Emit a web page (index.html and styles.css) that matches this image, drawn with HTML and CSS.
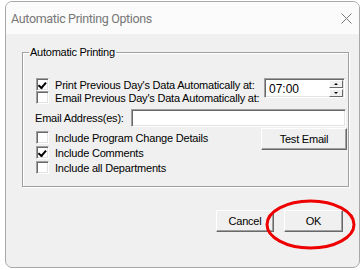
FILE: index.html
```html
<!DOCTYPE html>
<html lang="en">
<head>
	<title>Automatic Printing Options</title>
	<meta charset="utf-8">
<link rel="stylesheet" href="styles.css">
</head>
<body>

<div class="window">
	<div class="titlebar">
		<span class="title">Automatic Printing Options</span>
		<svg class="close" width="11" height="11" viewBox="0 0 11 11">
			<path d="M0.5 0.5 L10.5 10.5 M10.5 0.5 L0.5 10.5" stroke="#7a7a7a" stroke-width="1" fill="none"/>
		</svg>
	</div>

	<div class="content">
		<fieldset class="group">
			<legend>Automatic Printing</legend>

			<div class="toprows">
				<div class="checks">
					<label class="check"><span class="box on"></span>Print Previous Day's Data Automatically at:</label>
					<label class="check"><span class="box"></span>Email Previous Day's Data Automatically at:</label>
				</div>
				<div class="spinner">
					<span class="time">07:00</span>
					<span class="spins">
						<span class="spin up"></span>
						<span class="spin down"></span>
					</span>
				</div>
			</div>

			<div class="emailrow">
				<label class="emaillabel" for="email">Email Address(es):</label>
				<input id="email" class="field">
			</div>

			<div class="bottomrows">
				<div class="checks lower">
					<label class="check"><span class="box"></span>Include Program Change Details</label>
					<label class="check"><span class="box on"></span>Include Comments</label>
					<label class="check"><span class="box"></span>Include all Departments</label>
				</div>
				<button class="btn test">Test Email</button>
			</div>
		</fieldset>

		<div class="buttons">
			<button class="btn cancel">Cancel</button>
			<button class="btn ok">OK</button>
		</div>
	</div>

	<!-- red annotation round the OK button -->
	<svg class="circle" width="95" height="55" viewBox="0 0 95 55">
		<ellipse cx="47.5" cy="27.5" rx="43.5" ry="23.5" stroke="#ee0000" stroke-width="3" fill="none"/>
	</svg>
</div>

</body>
</html>
```

FILE: styles.css
```css
	body {
		margin: 0;
		background-color: #ffffff;
		font-family: "Liberation Sans", Arial, sans-serif;
		font-size: 11px;
		letter-spacing: -0.2px;
		color: #000;
	}
	.window {
		position: relative;
		margin: 1px 0 0 5px;
		width: 353px;
		height: 265px;
		border: 1px solid #a8a8a8;
		border-radius: 7px;
		background-color: #f0f0f0;
		overflow: hidden;
	}
	.titlebar {
		height: 32px;
		background-color: #fbfbfb;
		display: flex;
		align-items: center;
		justify-content: space-between;
		padding: 0 7px 0 5px;
	}
	.title {
		font-family: Roboto, "Noto Sans", sans-serif;
		font-size: 12.5px;
		letter-spacing: -0.35px;
		color: #777;
		margin-top: 1px;
	}
	.close {
		display: block;
		margin-top: 1px;
	}
	.content {
		padding: 12px 10px 0 16px;
	}
	.group {
		margin: 0;
		padding: 19px 2px 11px 13px;
		border: 1px solid #a0a0a0;
		box-shadow: 1px 1px 0 #fff, inset 1px 1px 0 #fff;
	}
	.group legend {
		padding: 0 1px;
		margin-left: -7px;
		line-height: 13px;
		letter-spacing: -0.25px;
	}
	.check {
		display: flex;
		align-items: center;
		height: 13px;
		white-space: nowrap;
	}
	.lower .check {
		height: 15px;
	}
	.box {
		position: relative;
		box-sizing: border-box;
		width: 13px;
		height: 13px;
		margin-right: 6px;
		background: #fff;
		border-top: 1px solid #a0a0a0;
		border-left: 1px solid #a0a0a0;
		border-bottom: 1px solid #fff;
		border-right: 1px solid #fff;
		box-shadow: inset 1px 1px 0 #696969, inset -1px -1px 0 #e3e3e3;
	}
	.box.on::after {
		content: "";
		position: absolute;
		left: 2px;
		top: 1px;
		width: 3px;
		height: 6px;
		border-right: 2px solid #000;
		border-bottom: 2px solid #000;
		transform: rotate(40deg) translate(1px, 0);
	}
	.toprows {
		display: flex;
		justify-content: space-between;
		align-items: flex-start;
	}
	.spinner {
		box-sizing: border-box;
		width: 81px;
		height: 20px;
		margin-right: 1px;
		display: flex;
		align-items: center;
		justify-content: space-between;
		background: #fff;
		border-top: 1px solid #a0a0a0;
		border-left: 1px solid #a0a0a0;
		border-bottom: 1px solid #fff;
		border-right: 1px solid #fff;
		box-shadow: inset 1px 1px 0 #696969, inset -1px -1px 0 #e3e3e3;
		padding: 0 1px 0 4px;
	}
	.time {
		font-size: 12px;
		letter-spacing: 0;
		margin-top: 1px;
	}
	.spins {
		display: flex;
		flex-direction: column;
		gap: 1px;
	}
	.spin {
		position: relative;
		box-sizing: border-box;
		width: 14px;
		height: 8px;
		background: #f0f0f0;
		border-top: 1px solid #fff;
		border-left: 1px solid #fff;
		border-bottom: 1px solid #696969;
		border-right: 1px solid #696969;
	}
	.spin::after {
		content: "";
		position: absolute;
		left: 4px;
		top: 2px;
		border-left: 2px solid transparent;
		border-right: 2px solid transparent;
	}
	.spin.up::after {
		border-bottom: 2px solid #000;
	}
	.spin.down::after {
		border-top: 2px solid #000;
	}
	.emailrow {
		display: flex;
		align-items: center;
		margin-top: 5px;
	}
	.emaillabel {
		width: 96px;
		margin-left: -1px;
	}
	.field {
		box-sizing: border-box;
		flex: 1;
		height: 18px;
		margin: 0;
		padding: 0 3px;
		background: #fff;
		border-top: 1px solid #a0a0a0;
		border-left: 1px solid #a0a0a0;
		border-bottom: 1px solid #fff;
		border-right: 1px solid #fff;
		box-shadow: inset 1px 1px 0 #696969, inset -1px -1px 0 #e3e3e3;
		outline: none;
	}
	.bottomrows {
		display: flex;
		justify-content: space-between;
		align-items: flex-start;
		margin-top: 1px;
	}
	.lower {
		padding-top: 2px;
	}
	.btn {
		box-sizing: border-box;
		height: 22px;
		margin: 0;
		padding: 0;
		font-family: "Liberation Sans", Arial, sans-serif;
		font-size: 11px;
		letter-spacing: -0.2px;
		color: #000;
		background: #f0f0f0;
		border-top: 1px solid #fff;
		border-left: 1px solid #fff;
		border-bottom: 1px solid #696969;
		border-right: 1px solid #696969;
		box-shadow: inset -1px -1px 0 #a0a0a0;
	}
	.test {
		width: 86px;
		margin-right: -1px;
	}
	.buttons {
		display: flex;
		justify-content: flex-end;
		gap: 10px;
		margin-top: 23px;
		padding-right: 6px;
	}
	.cancel {
		width: 58px;
	}
	.ok {
		width: 59px;
	}
	.circle {
		position: absolute;
		left: 257px;
		top: 195px;
	}
```
